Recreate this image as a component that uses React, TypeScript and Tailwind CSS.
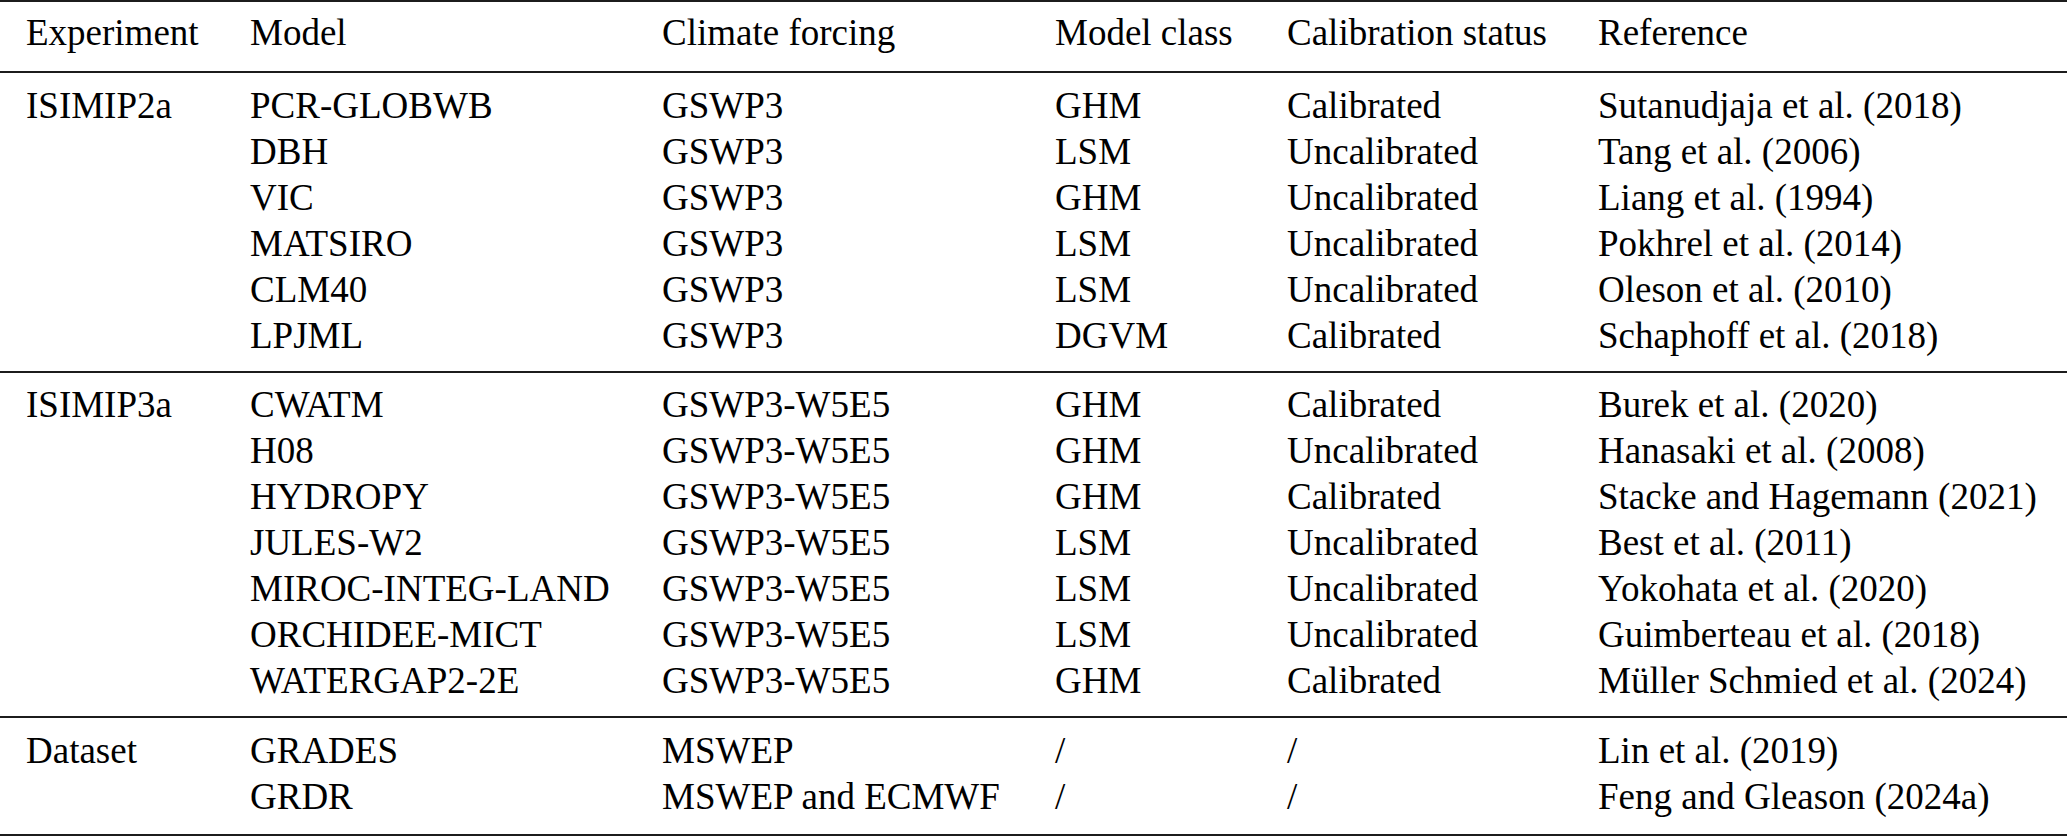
import React from 'react';

type Row = [string, string, string, string, string];

interface Section {
    experiment: string;
    rows: Row[];
    pad: string;
}

const sections: Section[] = [
    {
        experiment: 'ISIMIP2a',
        pad: 'pt-[10px] pb-[12px]',
        rows: [
            ['PCR-GLOBWB', 'GSWP3', 'GHM', 'Calibrated', 'Sutanudjaja et al. (2018)'],
            ['DBH', 'GSWP3', 'LSM', 'Uncalibrated', 'Tang et al. (2006)'],
            ['VIC', 'GSWP3', 'GHM', 'Uncalibrated', 'Liang et al. (1994)'],
            ['MATSIRO', 'GSWP3', 'LSM', 'Uncalibrated', 'Pokhrel et al. (2014)'],
            ['CLM40', 'GSWP3', 'LSM', 'Uncalibrated', 'Oleson et al. (2010)'],
            ['LPJML', 'GSWP3', 'DGVM', 'Calibrated', 'Schaphoff et al. (2018)'],
        ],
    },
    {
        experiment: 'ISIMIP3a',
        pad: 'pt-[9px] pb-[12px]',
        rows: [
            ['CWATM', 'GSWP3-W5E5', 'GHM', 'Calibrated', 'Burek et al. (2020)'],
            ['H08', 'GSWP3-W5E5', 'GHM', 'Uncalibrated', 'Hanasaki et al. (2008)'],
            ['HYDROPY', 'GSWP3-W5E5', 'GHM', 'Calibrated', 'Stacke and Hagemann (2021)'],
            ['JULES-W2', 'GSWP3-W5E5', 'LSM', 'Uncalibrated', 'Best et al. (2011)'],
            ['MIROC-INTEG-LAND', 'GSWP3-W5E5', 'LSM', 'Uncalibrated', 'Yokohata et al. (2020)'],
            ['ORCHIDEE-MICT', 'GSWP3-W5E5', 'LSM', 'Uncalibrated', 'Guimberteau et al. (2018)'],
            ['WATERGAP2-2E', 'GSWP3-W5E5', 'GHM', 'Calibrated', 'Müller Schmied et al. (2024)'],
        ],
    },
    {
        experiment: 'Dataset',
        pad: 'pt-[10px] pb-[14px]',
        rows: [
            ['GRADES', 'MSWEP', '/', '/', 'Lin et al. (2019)'],
            ['GRDR', 'MSWEP and ECMWF', '/', '/', 'Feng and Gleason (2024a)'],
        ],
    },
];

// column starts: 26, 250, 662, 1055, 1287, 1598
const grid = 'grid grid-cols-[224px_412px_393px_232px_311px_1fr] pl-[26px] h-[46px] items-center whitespace-nowrap';

const Rule = () => <div className="h-[2px] bg-[#1c1c1c]" />;

export default function App() {
    return (
        <div className="w-[2067px] h-[836px] bg-white text-black text-[37px] leading-[46px] font-['Liberation_Serif','Times_New_Roman',serif]">
            <Rule />
            {/* Header */}
            <div className="pt-[8px] pb-[15px]">
                <div className={grid}>
                    <span>Experiment</span>
                    <span>Model</span>
                    <span>Climate forcing</span>
                    <span>Model class</span>
                    <span>Calibration status</span>
                    <span>Reference</span>
                </div>
            </div>
            <Rule />

            {sections.map(section => (
                <React.Fragment key={section.experiment}>
                    <div className={section.pad}>
                        {section.rows.map((row, ri) => (
                            <div key={row[0]} className={grid}>
                                <span>{ri === 0 ? section.experiment : ''}</span>
                                {row.map((cell, ci) => (
                                    <span key={ci}>{cell}</span>
                                ))}
                            </div>
                        ))}
                    </div>
                    <Rule />
                </React.Fragment>
            ))}
        </div>
    );
}
